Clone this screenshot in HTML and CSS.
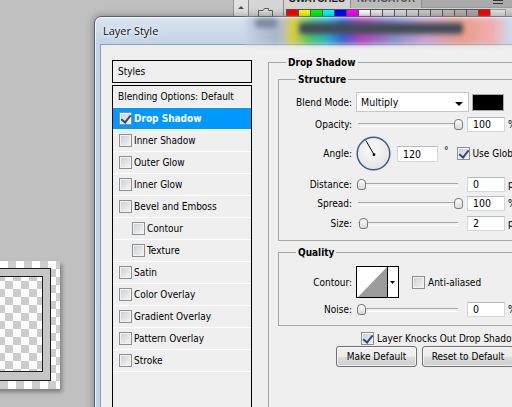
FILE: index.html
```html
<!DOCTYPE html>
<html lang="en">
<head>
    <meta charset="UTF-8">
    <title>Layer Style</title>
    <link rel="stylesheet" href="styles.css">
</head>
<body>
    <!-- document canvas behind the dialog -->
    <div class="doc">
        <div class="doc-stroke">
            <div class="doc-inner"></div>
        </div>
    </div>

    <!-- panels at the top right -->
    <div class="panels">
        <div class="scroll-col"><span class="arrow-up"></span></div>
        <div class="icon-col">
            <svg width="17" height="10" viewBox="0 0 17 10">
                <path d="M1.5 9.5 V2.5 H6 L7.5 0.5 H11.5 V2.5 H15.5 V9.5" fill="#dcdcdc" stroke="#5e5e5e"/>
            </svg>
        </div>
        <div class="swatch-panel">
            <div class="tabs">
                <span class="tab active">SWATCHES</span>
                <span class="tab">NAVIGATOR</span>
                <span class="menu"></span>
            </div>
            <div class="swatches">
                <span style="background:#ff0000"></span>
                <span style="background:#ffff00"></span>
                <span style="background:#00ff00"></span>
                <span style="background:#00ffff"></span>
                <span style="background:#0000ff"></span>
                <span style="background:#ff00ff"></span>
                <span style="background:#ffffff"></span>
                <span style="background:#ececec"></span>
                <span style="background:#e4e4e4"></span>
                <span style="background:#dcdcdc"></span>
                <span style="background:#d4d4d4"></span>
                <span style="background:#cccccc"></span>
                <span style="background:#c4c4c4"></span>
                <span style="background:#bcbcbc"></span>
                <span style="background:#b4b4b4"></span>
                <span style="background:#acacac"></span>
                <span style="background:#ff0000"></span>
                <span class="wide" style="background:#e2e2e2"></span>
            </div>
        </div>
    </div>

    <div class="window">
        <div class="titlebar">
            <div class="glass-blur">
                <span class="blob b-folder"></span>
                <span class="blob b-bar"></span>
            </div>
            <span class="title">Layer Style</span>
        </div>

        <div class="client">
            <div class="styles-col">
                <div class="styles-head">Styles</div>
                <ul class="styles-list">
                    <li>Blending Options: Default</li>
                    <li class="selected"><span class="cb checked"></span>Drop Shadow</li>
                    <li><span class="cb"></span>Inner Shadow</li>
                    <li><span class="cb"></span>Outer Glow</li>
                    <li><span class="cb"></span>Inner Glow</li>
                    <li><span class="cb"></span>Bevel and Emboss</li>
                    <li class="sub"><span class="cb"></span>Contour</li>
                    <li class="sub"><span class="cb"></span>Texture</li>
                    <li><span class="cb"></span>Satin</li>
                    <li><span class="cb"></span>Color Overlay</li>
                    <li><span class="cb"></span>Gradient Overlay</li>
                    <li><span class="cb"></span>Pattern Overlay</li>
                    <li><span class="cb"></span>Stroke</li>
                    <li class="empty"></li>
                </ul>
            </div>

            <div class="settings">
                <fieldset class="group outer">
                    <legend>Drop Shadow</legend>

                    <fieldset class="group inner structure">
                        <legend>Structure</legend>

                        <div class="row r-blend">
                            <span class="lbl">Blend Mode:</span>
                            <div class="select">Multiply<span class="caret"></span></div>
                            <span class="chip"></span>
                        </div>

                        <div class="row r-field r-opacity">
                            <span class="lbl">Opacity:</span>
                            <div class="slider"><span class="thumb" style="left:98px"></span></div>
                            <span class="num">100</span>
                            <span class="unit">%</span>
                        </div>

                        <div class="row r-angle">
                            <span class="lbl">Angle:</span>
                            <svg class="dial" width="35" height="35" viewBox="0 0 35 35">
                                <defs>
                                    <radialGradient id="dialFill" cx="45%" cy="40%" r="65%">
                                        <stop offset="0" stop-color="#fdfdfd"/>
                                        <stop offset="1" stop-color="#e0e0e0"/>
                                    </radialGradient>
                                </defs>
                                <circle cx="17.5" cy="17.5" r="16.3" fill="url(#dialFill)" stroke="#3f5c8c" stroke-width="1.5"/>
                                <line x1="18" y1="18.5" x2="9.8" y2="4.4" stroke="#000" stroke-width="1"/>
                                <rect x="16.8" y="17.4" width="2.4" height="2.4" fill="#000"/>
                            </svg>
                            <span class="num wide">120</span>
                            <span class="deg">°</span>
                            <span class="cb checked"></span>
                            <span class="cb-text">Use Global Light</span>
                        </div>

                        <div class="row r-field r-distance">
                            <span class="lbl">Distance:</span>
                            <div class="slider"><span class="thumb" style="left:1px"></span></div>
                            <span class="num">0</span>
                            <span class="unit">px</span>
                        </div>

                        <div class="row r-field r-spread">
                            <span class="lbl">Spread:</span>
                            <div class="slider"><span class="thumb" style="left:98px"></span></div>
                            <span class="num">100</span>
                            <span class="unit">%</span>
                        </div>

                        <div class="row r-field r-size">
                            <span class="lbl">Size:</span>
                            <div class="slider"><span class="thumb" style="left:3px"></span></div>
                            <span class="num">2</span>
                            <span class="unit">px</span>
                        </div>
                    </fieldset>

                    <fieldset class="group inner quality">
                        <legend>Quality</legend>

                        <div class="row r-contour">
                            <span class="lbl">Contour:</span>
                            <svg class="contour" width="43" height="32" viewBox="0 0 43 32">
                                <rect x="0.5" y="0.5" width="42" height="31" fill="#fff" stroke="#000"/>
                                <polygon points="2,31 31,1 31,31" fill="#9b9b9b"/>
                                <line x1="31.5" y1="1" x2="31.5" y2="31" stroke="#000"/>
                                <polygon points="34,15 39,15 36.5,18" fill="#000"/>
                            </svg>
                            <span class="cb aa"></span>
                            <span class="cb-text">Anti-aliased</span>
                        </div>

                        <div class="row r-field r-noise">
                            <span class="lbl">Noise:</span>
                            <div class="slider"><span class="thumb" style="left:1px"></span></div>
                            <span class="num">0</span>
                            <span class="unit">%</span>
                        </div>
                    </fieldset>

                    <div class="row r-knock">
                        <span class="cb checked"></span>
                        <span class="cb-text">Layer Knocks Out Drop Shadow</span>
                    </div>

                    <div class="row r-buttons">
                        <button class="btn btn-make">Make Default</button>
                        <button class="btn btn-reset">Reset to Default</button>
                    </div>
                </fieldset>
            </div>
        </div>
    </div>
</body>
</html>
```

FILE: styles.css
```css
/* Layer Style dialog */
* {
    box-sizing: border-box;
}

body {
    margin: 0;
    width: 512px;
    height: 407px;
    overflow: hidden;
    position: relative;
    background: #c0c0c0;
    font-family: "DejaVu Sans Condensed", "Liberation Sans", sans-serif;
    font-size: 10px;
    color: #000;
}

/* document canvas */
.doc {
    position: absolute;
    left: -80px;
    top: 261px;
    width: 140px;
    height: 128px;
    padding: 7px 9px 8px 0;
    background-color: #fff;
    background-image:
        linear-gradient(45deg, #cccccc 25%, transparent 25%, transparent 75%, #cccccc 75%),
        linear-gradient(45deg, #cccccc 25%, transparent 25%, transparent 75%, #cccccc 75%);
    background-size: 16px 16px;
    background-position: 0 0, 8px 8px;
    box-shadow: 2px 3px 4px rgba(0, 0, 0, 0.35);
}

.doc-stroke {
    height: 100%;
    border: 1px solid #1e1e1e;
    background: #c6c6c6;
    padding: 7px 7px 8px 7px;
}

.doc-inner {
    height: 100%;
    border: 1px solid #1e1e1e;
    background-color: #fff;
    background-image:
        linear-gradient(45deg, #cccccc 25%, transparent 25%, transparent 75%, #cccccc 75%),
        linear-gradient(45deg, #cccccc 25%, transparent 25%, transparent 75%, #cccccc 75%);
    background-size: 16px 16px;
    background-position: 4px 4px, 12px 12px;
}

/* top panels */
.panels {
    position: absolute;
    left: 233px;
    top: 0;
    width: 279px;
    height: 20px;
    display: flex;
}

.scroll-col {
    width: 16px;
    background: #e2e2e2;
    border-left: 1px solid #9a9a9a;
    border-right: 1px solid #8a8a8a;
    display: flex;
    justify-content: center;
    padding-top: 6px;
}

.arrow-up {
    width: 0;
    height: 0;
    border-left: 3px solid transparent;
    border-right: 3px solid transparent;
    border-bottom: 3px solid #555;
}

.icon-col {
    width: 35px;
    background: #d6d6d6;
    border-right: 1px solid #8e8e8e;
    padding: 8px 0 0 8px;
}

.icon-col svg {
    display: block;
}

.swatch-panel {
    flex: 1;
    background: #d4d4d4;
}

.tabs {
    display: flex;
    height: 8px;
    background: #aaaaaa;
    border-bottom: 1px solid #9c9c9c;
}

.tab {
    height: 8px;
    display: flex;
    align-items: flex-end;
    padding: 0 6px 4px 6px;
    line-height: 10px;
    font-family: "Liberation Sans", sans-serif;
    font-size: 10px;
    font-weight: bold;
    color: #555;
    background: #bababa;
    border-right: 1px solid #8c8c8c;
}

.tab.active {
    width: 67px;
    padding-left: 5px;
    background: #d4d4d4;
    color: #1e1e1e;
}

.menu {
    margin-left: auto;
    margin-right: 9px;
    width: 10px;
    height: 4px;
    border-top: 1px solid #333;
    border-bottom: 1px solid #333;
}

.swatches {
    display: flex;
    padding: 1px 0 0 2px;
}

.swatches span {
    width: 13px;
    height: 8px;
    border: 1px solid #555;
    margin-right: -1px;
}

.swatches .wide {
    width: 16px;
    border-color: #9a9a9a;
}

/* dialog window */
.window {
    position: absolute;
    left: 94px;
    top: 16px;
    width: 450px;
    height: 420px;
    border: 1px solid #56616e;
    border-radius: 7px 7px 0 0;
    padding: 0 0 0 5px;
    background: linear-gradient(#dae4f0, #c4d3e6 26px, #c2d1e4);
    box-shadow: 0 0 9px rgba(0, 0, 0, 0.35), inset 1px 1px 0 rgba(255, 255, 255, 0.7);
}

.titlebar {
    position: relative;
    height: 27px;
    margin-left: -5px;
    padding-left: 8px;
    display: flex;
    align-items: center;
}

/* blurred panels seen through the glass */
.glass-blur {
    position: absolute;
    left: 150px;
    top: 1px;
    width: 272px;
    height: 26px;
    background: linear-gradient(to right, #c6d4e7 0, #aab6c8 30px, #b4bcc8 38px, #e0d034 48px, #4fc45e 64px, #26b2c8 82px, #3a5ed4 98px, #b440b6 116px, #8a8ec8 150px, #caa0cc 180px, #ea9c86 216px, #f0aeb2 248px, #cddcf1 266px);
    filter: blur(2.5px);
}

.blob {
    position: absolute;
    display: block;
}

.b-folder {
    left: 10px;
    top: 0;
    width: 22px;
    height: 10px;
    background: #7d8aa2;
    border-radius: 4px;
}

.b-bar {
    left: 54px;
    top: 5px;
    width: 164px;
    height: 11px;
    background: #434b58;
    border-radius: 3px;
}

.title {
    position: relative;
    font-family: "Open Sans", "Liberation Sans", sans-serif;
    font-size: 11px;
    color: #111;
    text-shadow: 0 0 6px #fff, 0 0 3px #fff;
}

.client {
    height: 400px;
    display: flex;
    align-items: flex-start;
    gap: 16px;
    padding: 11px 0 0 11px;
    background: #efefef;
    border-top: 1px solid #8d9cb0;
    border-left: 1px solid #8d9cb0;
}

/* styles list */
.styles-col {
    width: 140px;
    margin-top: 4px;
    flex: none;
}

.styles-head {
    height: 23px;
    border: 1px solid #000;
    padding-left: 5px;
    line-height: 21px;
}

.styles-list {
    list-style: none;
    margin: 2px 0 0 0;
    padding: 0;
    border: 1px solid #000;
    border-bottom: none;
}

.styles-list li {
    height: 22px;
    border-bottom: 1px solid #fff;
    display: flex;
    align-items: center;
    padding-left: 5px;
    white-space: nowrap;
}

.styles-list li .cb {
    margin-left: 1px;
    margin-right: 2px;
}

.styles-list li.sub {
    padding-left: 18px;
}

.styles-list li.selected {
    background: #0099ff;
    color: #fff;
    font-weight: bold;
}

.styles-list li.empty {
    height: 60px;
    border-bottom: none;
}

/* checkbox */
.cb {
    position: relative;
    width: 13px;
    height: 13px;
    flex: none;
    border: 1px solid #8e8f8f;
    background: linear-gradient(135deg, #c9cdd2, #f6f6f6);
    box-shadow: inset 0 0 0 1px #f2f2f2;
}

.cb.checked::after {
    content: "";
    position: absolute;
    left: 3px;
    top: 0;
    width: 4px;
    height: 8px;
    border-right: 2px solid #2b4a86;
    border-bottom: 2px solid #2b4a86;
    transform: rotate(38deg);
}

.cb-text {
    margin-left: 3px;
    white-space: nowrap;
}

/* settings column */
.settings {
    width: 270px;
    flex: none;
}

fieldset.group {
    margin: 0;
    padding: 0;
    min-width: 0;
    border: 1px solid #a6a6a6;
}

fieldset.group legend {
    margin-left: 17px;
    padding: 0 2px;
    font-weight: bold;
    line-height: 13px;
}

.outer {
    padding-top: 4px !important;
    height: 400px;
    border-right: none !important;
}

.inner {
    margin-left: 9px !important;
    border-right: none !important;
}

.structure {
    padding: 6px 0 9px 0 !important;
}

.quality {
    margin-top: 5px !important;
    padding: 7px 0 8px 0 !important;
}

.row {
    display: flex;
    align-items: center;
    white-space: nowrap;
}

.lbl {
    width: 73px;
    margin-right: 4px;
    text-align: right;
    flex: none;
}

.r-blend {
    height: 20px;
}

.r-field {
    height: 15px;
    margin-top: 4px;
}

.r-opacity {
    margin-top: 5px;
}

.r-distance {
    margin-top: 6px;
}

.r-size {
    margin-top: 5px;
}

.r-angle {
    height: 35px;
    margin-top: 4px;
}

.select {
    position: relative;
    width: 113px;
    height: 20px;
    margin-right: 3px;
    padding: 3px 0 0 4px;
    background: #fff;
    border: 1px solid #c8c8c8;
    font-size: 10.5px;
}

.caret {
    position: absolute;
    right: 5px;
    top: 9px;
    width: 0;
    height: 0;
    border-left: 4px solid transparent;
    border-right: 4px solid transparent;
    border-top: 4px solid #000;
}

.chip {
    width: 32px;
    height: 17px;
    background: #000;
    border: 1px solid #a9a9a9;
}

.slider {
    position: relative;
    width: 104px;
    height: 15px;
    margin-right: 7px;
    flex: none;
}

.slider::before {
    content: "";
    position: absolute;
    left: 2px;
    right: 2px;
    top: 6px;
    height: 2px;
    border-top: 1px solid #a8a8a8;
    border-bottom: 1px solid #fff;
}

.thumb {
    position: absolute;
    top: 2px;
    width: 9px;
    height: 11px;
    border: 1px solid #7a7a7a;
    border-radius: 4px 4px 3px 3px;
    background: linear-gradient(#fefefe, #d8d8d8);
}

.num {
    width: 38px;
    height: 15px;
    padding-left: 5px;
    line-height: 13px;
    background: #fff;
    border: 1px solid #d3d8df;
    border-top-color: #b5b9c0;
    font-size: 10.5px;
    flex: none;
}

.num.wide {
    width: 41px;
    height: 16px;
    line-height: 14px;
}

.unit {
    margin-left: 3px;
}

.dial {
    flex: none;
    margin-right: 6px;
}

.deg {
    margin-left: 6px;
    margin-right: 8px;
    position: relative;
    top: -3px;
}

.r-contour {
    height: 32px;
}

.contour {
    flex: none;
    margin-right: 13px;
}

.r-noise {
    margin-top: 4px;
}

.r-knock {
    height: 13px;
    margin: 6px 0 0 92px;
}

.r-buttons {
    margin: 1px 0 0 67px;
    gap: 5px;
}

.btn {
    height: 21px;
    padding: 0;
    border: 1px solid #707070;
    border-radius: 3px;
    background: linear-gradient(#f2f2f2 0%, #ebebeb 50%, #dddddd 51%, #cfcfcf 100%);
    box-shadow: inset 0 0 0 1px rgba(255, 255, 255, 0.7);
    font-family: inherit;
    font-size: 10px;
    color: #000;
}

.btn-make {
    width: 81px;
}

.btn-reset {
    width: 92px;
}
```
